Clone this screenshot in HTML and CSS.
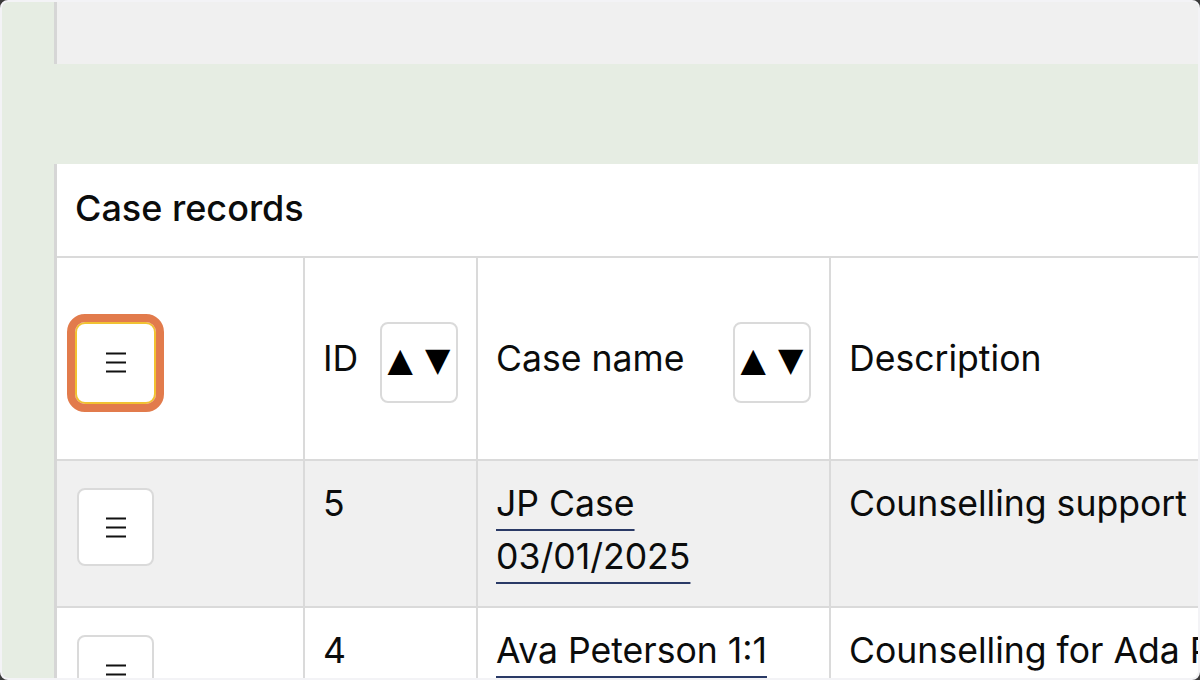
FILE: index.html
```html
<!DOCTYPE html>
<html lang="en">
<head>
<meta charset="utf-8">
<title>Case records</title>
<link rel="stylesheet" href="styles.css">
</head>
<body>
<div class="frame">
  <aside class="sidebar"></aside>
  <div class="main">
    <header class="topbar"></header>
    <div class="banner"></div>
    <section class="card">
      <h2 class="card-title">Case records</h2>
      <table class="records">
        <colgroup>
          <col class="c-menu">
          <col class="c-id">
          <col class="c-name">
          <col class="c-desc">
        </colgroup>
        <thead>
          <tr>
            <th class="cell-menu">
              <button class="menu-btn is-focused" aria-label="Table options">
                <svg class="menu-icon" viewBox="0 0 20 21" width="20" height="21" aria-hidden="true"><path d="M0 1.5h20M0 10.5h20M0 19.5h20"/></svg>
              </button>
            </th>
            <th>
              <div class="th-inner"><span>ID</span><button class="sort-btn" aria-label="Sort by ID"><span>▲</span><span>▼</span></button></div>
            </th>
            <th>
              <div class="th-inner"><span>Case name</span><button class="sort-btn" aria-label="Sort by case name"><span>▲</span><span>▼</span></button></div>
            </th>
            <th>
              <div class="th-inner"><span>Description</span></div>
            </th>
          </tr>
        </thead>
        <tbody>
          <tr class="row-alt">
            <td class="cell-menu">
              <button class="menu-btn" aria-label="Row options">
                <svg class="menu-icon" viewBox="0 0 20 21" width="20" height="21" aria-hidden="true"><path d="M0 1.5h20M0 10.5h20M0 19.5h20"/></svg>
              </button>
            </td>
            <td>5</td>
            <td><a class="case-link" href="#">JP Case 03/01/2025</a></td>
            <td>Counselling support</td>
          </tr>
          <tr>
            <td class="cell-menu">
              <button class="menu-btn" aria-label="Row options">
                <svg class="menu-icon" viewBox="0 0 20 21" width="20" height="21" aria-hidden="true"><path d="M0 1.5h20M0 10.5h20M0 19.5h20"/></svg>
              </button>
            </td>
            <td>4</td>
            <td><a class="case-link" href="#">Ava Peterson 1:1</a></td>
            <td>Counselling for Ada Peterson</td>
          </tr>
        </tbody>
      </table>
    </section>
  </div>
</div>
</body>
</html>
```
FILE: styles.css
```css
* { box-sizing: border-box; }

html, body {
  margin: 0;
  padding: 0;
  background: #3a3a3a;
}

body {
  font-family: "Inter", "Liberation Sans", sans-serif;
  color: #0b0c0c;
}

.frame {
  display: flex;
  width: 1200px;
  height: 680px;
  border: 2px solid #f3f3f6;
  border-radius: 8px;
  overflow: hidden;
  background: #e6ede3;
}

.sidebar {
  flex: none;
  width: 52px;
}

.main {
  flex: 1;
  min-width: 0;
  display: flex;
  flex-direction: column;
}

.topbar {
  flex: none;
  height: 62px;
  background: #f0f0f0;
  border-left: 3px solid #d6d6d6;
}

.banner {
  flex: none;
  height: 100px;
}

.card {
  flex: 1;
  min-height: 0;
  background: #ffffff;
  border-left: 3px solid #d6d6d6;
  overflow: hidden;
}

.card-title {
  margin: 0;
  height: 94px;
  display: flex;
  align-items: center;
  padding: 0 18px 4px;
  font-size: 36px;
  font-weight: 500;
  border-bottom: 2px solid #dadada;
}

.records {
  border-collapse: separate;
  border-spacing: 0;
  table-layout: fixed;
  width: 1474px;
  font-size: 35.6px;
  line-height: 53px;
}

.c-menu { width: 248px; }
.c-id { width: 173px; }
.c-name { width: 353px; }
.c-desc { width: 700px; }

.records th,
.records td {
  border-right: 2px solid #dadada;
  border-bottom: 2px solid #dadada;
  text-align: left;
  font-weight: 400;
}

.records th {
  height: 203px;
  padding: 0 18px;
  vertical-align: middle;
}

.records td {
  padding: 16px 18px 23px;
  vertical-align: top;
}

.records td.cell-menu {
  padding-top: 27px;
}

.row-alt td {
  background: #f0f0f0;
}

.th-inner {
  display: flex;
  align-items: center;
  justify-content: space-between;
}

.menu-btn {
  display: flex;
  align-items: center;
  justify-content: center;
  width: 77px;
  height: 78px;
  margin-left: 2px;
  padding: 0;
  background: #ffffff;
  border: 2px solid #dadada;
  border-radius: 8px;
}

.cell-menu .menu-btn.is-focused {
  margin-top: 8px;
  border-color: #ffffff;
  box-shadow: 0 0 0 2px #f1c232;
  outline: 8px solid #e27b4c;
  outline-offset: 2px;
}

.menu-icon {
  display: block;
  stroke: #111111;
  stroke-width: 1.8;
  fill: none;
}

.sort-btn {
  display: flex;
  align-items: center;
  justify-content: center;
  gap: 12px;
  width: 78px;
  height: 81px;
  margin-top: 8px;
  padding: 0 0 6px;
  background: #ffffff;
  border: 2px solid #dadada;
  border-radius: 8px;
  font-family: "DejaVu Sans", sans-serif;
  font-size: 33px;
  line-height: 1;
  color: #000000;
}

.case-link {
  color: #0b0c0c;
  text-decoration: underline;
  text-decoration-color: #2a3a66;
  text-decoration-thickness: 2px;
  text-underline-offset: 13px;
}
```
